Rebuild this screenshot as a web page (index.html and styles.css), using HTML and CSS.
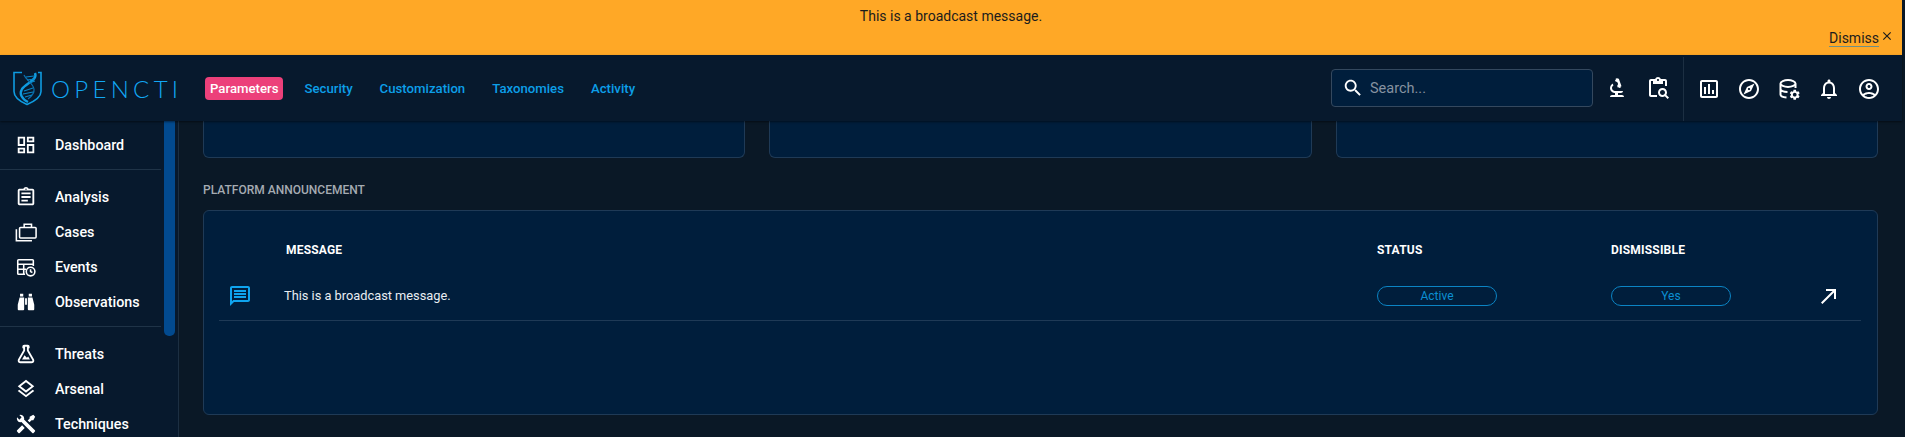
FILE: index.html
```html
<!DOCTYPE html>
<html lang="en">
<head>
    <meta charset="UTF-8">
    <title>OpenCTI - Parameters</title>
    <link rel="stylesheet" href="styles.css">
</head>
<body>
    <div class="banner">
        <div class="banner-text">This is a broadcast message.</div>
        <div class="banner-actions">
            <a class="dismiss">Dismiss</a>
            <svg class="close-icon" viewBox="0 0 24 24"><path d="M19 6.41L17.59 5 12 10.59 6.41 5 5 6.41 10.59 12 5 17.59 6.41 19 12 13.41 17.59 19 19 17.59 13.41 12z"/></svg>
        </div>
    </div>

    <header class="topbar">
        <div class="logo">
            <svg class="logo-mark" viewBox="0 0 30 35" fill="none" stroke="#0f9be0">
                <path d="M9 1.5H1v19c0 6 6 10 13 13 7-3 14-7 14-13v-19h-3" stroke-width="1.6"/>
                <path d="M22 2C25 9 13 12 9 18c-3 5 0 10 6 13" stroke-width="2.4"/>
                <path d="M11 4c2 5 9 8 10 14 .6 4-2 7-6 10" stroke-width="1.2" stroke="#0a6fae"/>
                <path d="M13 6l8-1M14 9l8-1M16 12l6-2M11 20l9-3M10 23l10-2M12 26l7-2" stroke-width="1.1" stroke="#0a86c5"/>
            </svg>
            <span class="logo-text">OPENCTI</span>
        </div>
        <nav class="tabs">
            <a class="tab tab-active">Parameters</a>
            <a class="tab">Security</a>
            <a class="tab">Customization</a>
            <a class="tab">Taxonomies</a>
            <a class="tab">Activity</a>
        </nav>
        <div class="search">
            <svg class="icon" viewBox="0 0 24 24"><path d="M15.5 14h-.79l-.28-.27C15.41 12.59 16 11.11 16 9.5 16 5.91 13.09 3 9.5 3S3 5.91 3 9.5 5.91 16 9.5 16c1.61 0 3.09-.59 4.23-1.57l.27.28v.79l5 4.99L20.49 19l-4.99-5zm-6 0C7.01 14 5 11.99 5 9.5S7.01 5 9.5 5 14 7.01 14 9.5 11.99 14 9.5 14z"/></svg>
            <span class="search-text">Search...</span>
        </div>
        <div class="tools">
            <svg class="icon" viewBox="0 0 24 24"><path d="M7 19c-1.1 0-2 .9-2 2h14c0-1.1-.9-2-2-2h-4v-2h3c1.1 0 2-.9 2-2h-8c-1.66 0-3-1.34-3-3 0-1.09.59-2.04 1.46-2.56C8.17 9.03 8 8.54 8 8c0-.21.04-.42.09-.62C6.28 8.13 5 9.92 5 12c0 2.76 2.24 5 5 5v2H7z"/><path d="M10.56 5.51C11.91 5.54 13 6.64 13 8c0 .75-.33 1.41-.85 1.87l.59 1.62.94-.34.34.94 1.88-.68-.34-.94.94-.34-2.74-7.52-.94.34-.34-.94-1.88.68.34.94-.94.35.56 1.53z"/></svg>
            <svg class="icon" viewBox="0 0 24 24"><path d="M5 5h2v3h10V5h2v5h2V5c0-1.1-.9-2-2-2h-4.18C14.4 1.84 13.3 1 12 1S9.6 1.84 9.18 3H5c-1.1 0-2 .9-2 2v14c0 1.1.9 2 2 2h6v-2H5V5zm7-2c.55 0 1 .45 1 1s-.45 1-1 1-1-.45-1-1 .45-1 1-1z"/><path d="M20.3 18.9c.4-.7.7-1.5.7-2.4 0-2.5-2-4.5-4.5-4.5S12 14 12 16.5s2 4.5 4.5 4.5c.9 0 1.7-.3 2.4-.7l2.7 2.7 1.4-1.4-2.7-2.7zm-3.8.1c-1.4 0-2.5-1.1-2.5-2.5s1.1-2.5 2.5-2.5 2.5 1.1 2.5 2.5-1.1 2.5-2.5 2.5z"/></svg>
        </div>
        <div class="tools tools-user">
            <svg class="icon" viewBox="0 0 24 24"><path d="M9 17H7v-7h2v7zm4 0h-2V7h2v10zm4 0h-2v-4h2v4zm2 2H5V5h14v14zm0-16H5c-1.1 0-2 .9-2 2v14c0 1.1.9 2 2 2h14c1.1 0 2-.9 2-2V5c0-1.1-.9-2-2-2z"/></svg>
            <svg class="icon" viewBox="0 0 24 24"><path d="M12 2C6.48 2 2 6.48 2 12s4.48 10 10 10 10-4.48 10-10S17.52 2 12 2zm0 18c-4.41 0-8-3.59-8-8s3.59-8 8-8 8 3.59 8 8-3.59 8-8 8zm-5.5-2.5l7.51-3.49L17.5 6.5 9.99 9.99 6.5 17.5zm5.5-6.6c.61 0 1.1.49 1.1 1.1s-.49 1.1-1.1 1.1-1.1-.49-1.1-1.1.49-1.1 1.1-1.1z"/></svg>
            <svg class="icon" viewBox="0 0 24 24">
                <path class="line" d="M3.500 6.500C3.500 4.600 7.100 3 11 3s7.500 1.600 7.500 3.500S14.900 10 11 10 3.500 8.400 3.500 6.500zM3.500 6.500v11c0 1.500 2.500 2.700 6 3M18.500 6.500V11M3.500 12c0 1.600 3 3 7 3"/>
                <path transform="translate(11.500 11.500) scale(.52)" d="M19.14 12.94c.04-.3.06-.61.06-.94 0-.32-.02-.64-.07-.94l2.03-1.58c.18-.14.23-.41.12-.61l-1.92-3.32c-.12-.22-.37-.29-.59-.22l-2.39.96c-.5-.38-1.03-.7-1.62-.94l-.36-2.54c-.04-.24-.24-.41-.48-.41h-3.84c-.24 0-.43.17-.47.41l-.36 2.54c-.59.24-1.13.57-1.62.94l-2.39-.96c-.22-.08-.47 0-.59.22L2.74 8.87c-.12.21-.08.47.12.61l2.03 1.58c-.05.3-.09.63-.09.94s.02.64.07.94l-2.03 1.58c-.18.14-.23.41-.12.61l1.92 3.32c.12.22.37.29.59.22l2.39-.96c.5.38 1.03.7 1.62.94l.36 2.54c.05.24.24.41.48.41h3.84c.24 0 .44-.17.47-.41l.36-2.54c.59-.24 1.13-.56 1.62-.94l2.39.96c.22.08.47 0 .59-.22l1.92-3.32c.12-.22.07-.47-.12-.61l-2.01-1.58zM12 15.6c-1.98 0-3.6-1.62-3.6-3.6s1.62-3.6 3.6-3.6 3.6 1.62 3.6 3.6-1.62 3.6-3.6 3.6z"/>
            </svg>
            <svg class="icon" viewBox="0 0 24 24"><path d="M12 22c1.1 0 2-.9 2-2h-4c0 1.1.9 2 2 2zm6-6v-5c0-3.07-1.63-5.64-4.5-6.32V4c0-.83-.67-1.5-1.5-1.5s-1.5.67-1.5 1.5v.68C7.64 5.36 6 7.92 6 11v5l-2 2v1h16v-1l-2-2zm-2 1H8v-6c0-2.48 1.51-4.5 4-4.5s4 2.02 4 4.5v6z"/></svg>
            <svg class="icon" viewBox="0 0 24 24"><path d="M12 2C6.48 2 2 6.48 2 12s4.48 10 10 10 10-4.48 10-10S17.52 2 12 2zM7.35 18.5C8.66 17.56 10.26 17 12 17s3.34.56 4.65 1.5c-1.31.94-2.91 1.5-4.65 1.5s-3.34-.56-4.65-1.5zm10.79-1.38C16.45 15.8 14.32 15 12 15s-4.45.8-6.14 2.12C4.7 15.73 4 13.95 4 12c0-4.42 3.58-8 8-8s8 3.58 8 8c0 1.95-.7 3.73-1.86 5.12z"/><path d="M12 6c-1.93 0-3.5 1.57-3.5 3.5S10.07 13 12 13s3.5-1.57 3.5-3.5S13.93 6 12 6zm0 5c-.83 0-1.5-.67-1.5-1.5S11.17 8 12 8s1.5.67 1.5 1.5S12.83 11 12 11z"/></svg>
        </div>
    </header>

    <div class="layout">
        <aside class="sidebar">
            <div class="scroll-thumb"></div>
            <div class="nav-group nav-first">
                <a class="nav-item"><svg class="icon" viewBox="0 0 24 24"><path d="M19 5v2h-4V5h4M9 5v6H5V5h4m10 8v6h-4v-6h4M9 17v2H5v-2h4M21 3h-8v6h8V3zM11 3H3v10h8V3zm10 8h-8v10h8V11zm-10 4H3v6h8v-6z"/></svg>Dashboard</a>
            </div>
            <div class="nav-group">
                <a class="nav-item"><svg class="icon" viewBox="0 0 24 24"><path d="M7 15h7v2H7zm0-4h10v2H7zm0-4h10v2H7zm12-4h-4.18C14.4 1.84 13.3 1 12 1c-1.3 0-2.4.84-2.82 2H5c-.14 0-.27.01-.4.04-.39.08-.74.28-1.01.55-.18.18-.33.4-.43.64-.1.23-.16.49-.16.77v14c0 .27.06.54.16.78s.25.45.43.64c.27.27.62.47 1.01.55.13.02.26.03.4.03h14c1.1 0 2-.9 2-2V5c0-1.1-.9-2-2-2zm-7-.25c.41 0 .75.34.75.75s-.34.75-.75.75-.75-.34-.75-.75.34-.75.75-.75zM19 19H5V5h14v14z"/></svg>Analysis</a>
                <a class="nav-item"><svg class="icon" viewBox="0 0 24 24"><g class="line thin"><path d="M1.500 9v12.500h17"/><rect x="5" y="7" width="18" height="11.500" rx="1"/><path d="M10 7V3.500h8V7"/></g></svg>Cases</a>
                <a class="nav-item"><svg class="icon" viewBox="0 0 24 24"><g class="line thin"><path d="M11 20H4a1 1 0 0 1-1-1V5a1 1 0 0 1 1-1h15a1 1 0 0 1 1 1v6M3 9h17M3 14.500h9M9.500 9v11"/><circle cx="17" cy="17" r="4.700"/><path d="M17 14.500V17l2 1"/></g></svg>Events</a>
                <a class="nav-item"><svg class="icon" viewBox="0 0 24 24"><path d="M11 8h2v7h-2zM10 20a1 1 0 0 1-1 1H4a1 1 0 0 1-1-1v-5l2-8h5v13zM14 20V7h5l2 8v5a1 1 0 0 1-1 1h-5a1 1 0 0 1-1-1zM5.500 3H9v3H5.500zM15 3h3.500v3H15z"/></svg>Observations</a>
            </div>
            <div class="nav-group">
                <a class="nav-item"><svg class="icon" viewBox="0 0 24 24"><path d="M5,19A1,1 0 0,0 6,20H18A1,1 0 0,0 19,19C19,18.79 18.93,18.59 18.82,18.43L13,8.35V4H11V8.35L5.18,18.43C5.07,18.59 5,18.79 5,19M6,22A3,3 0 0,1 3,19C3,18.4 3.18,17.84 3.5,17.37L9,7.81V6A1,1 0 0,1 8,5V4A2,2 0 0,1 10,2H14A2,2 0 0,1 16,4V5A1,1 0 0,1 15,6V7.81L20.5,17.37C20.82,17.84 21,18.4 21,19A3,3 0 0,1 18,22H6M13,16L14.34,14.66L16.27,18H7.73L10.39,13.39L13,16Z"/></svg>Threats</a>
                <a class="nav-item"><svg class="icon" viewBox="0 0 24 24"><path d="M11.99 18.54l-7.37-5.73L3 14.07l9 7 9-7-1.63-1.27zM12 16l7.36-5.73L21 9l-9-7-9 7 1.63 1.27L12 16zm0-11.47L17.74 9 12 13.47 6.26 9 12 4.53z"/></svg>Arsenal</a>
                <a class="nav-item"><svg class="icon" viewBox="0 0 24 24"><path d="M21.71 20.29L20.29 21.71A1 1 0 0 1 18.88 21.71L7 9.85A3.81 3.81 0 0 1 6 10A4 4 0 0 1 2.22 4.7L4.76 7.24L5.29 6.71L6.71 5.29L7.24 4.76L4.7 2.22A4 4 0 0 1 10 6A3.81 3.81 0 0 1 9.85 7L21.71 18.88A1 1 0 0 1 21.71 20.29M2.29 18.88A1 1 0 0 0 2.29 20.29L3.71 21.71A1 1 0 0 0 5.12 21.71L10.59 16.25L7.76 13.42M20 2L16 4V6L13.83 8.17L15.83 10.17L18 8H20L22 4Z"/></svg>Techniques</a>
            </div>
        </aside>

        <main class="content">
            <div class="cards">
                <div class="card"></div>
                <div class="card"></div>
                <div class="card"></div>
            </div>
            <h2 class="section-title">PLATFORM ANNOUNCEMENT</h2>
            <section class="panel">
                <div class="list-header">
                    <span></span>
                    <span class="col-message">MESSAGE</span>
                    <span>STATUS</span>
                    <span>DISMISSIBLE</span>
                </div>
                <div class="list-row">
                    <svg class="message-icon" viewBox="0 0 24 24"><path d="M4 4h16v12H5.17L4 17.17V4m0-2c-1.1 0-1.99.9-1.99 2L2 22l4-4h14c1.1 0 2-.9 2-2V4c0-1.1-.9-2-2-2H4zm2 10h12v2H6v-2zm0-3h12v2H6V9zm0-3h12v2H6V6z"/></svg>
                    <span class="message">This is a broadcast message.</span>
                    <span class="chip">Active</span>
                    <span class="chip">Yes</span>
                    <svg class="row-arrow" viewBox="0 0 24 24"><path d="M9 5v2h6.59L4 18.59 5.41 20 17 8.41V15h2V5z"/></svg>
                </div>
            </section>
        </main>
    </div>
</body>
</html>
```

FILE: styles.css
```css
/* General */
html, body {
    height: 100%;
}

body {
    font-family: Roboto, "Liberation Sans", sans-serif;
    background-color: #0a1826;
    color: #fff;
    margin: 0;
    padding-right: 3px;
    display: flex;
    flex-direction: column;
    overflow: hidden;
}

.icon {
    width: 24px;
    height: 24px;
    fill: currentColor;
    flex-shrink: 0;
}

.icon .line {
    fill: none;
    stroke: currentColor;
    stroke-width: 2;
}

.icon .thin {
    stroke-width: 1.7;
}

/* Broadcast banner */
.banner {
    height: 55px;
    flex-shrink: 0;
    box-sizing: border-box;
    background-color: #ffa826;
    color: #1c1c1c;
    font-size: 14px;
    padding-top: 8px;
}

.banner-text {
    text-align: center;
    line-height: 16px;
}

.banner-actions {
    display: flex;
    justify-content: flex-end;
    align-items: flex-start;
    gap: 1px;
    margin-top: 6px;
    padding-right: 8px;
}

.dismiss {
    line-height: 16px;
    border-bottom: 1px solid #6f8f86;
}

.close-icon {
    width: 14px;
    height: 14px;
    margin-top: -1px;
    fill: #1c1c1c;
}

/* Top bar */
.topbar {
    height: 66px;
    flex-shrink: 0;
    display: flex;
    align-items: center;
    background-color: #07192d;
    box-shadow: 0 1px 2px rgba(0, 0, 0, 0.5);
    position: relative;
    z-index: 2;
}

.logo {
    display: flex;
    align-items: center;
    gap: 8px;
    width: 205px;
    box-sizing: border-box;
    padding-left: 13px;
}

.logo-mark {
    width: 30px;
    height: 35px;
}

.logo-text {
    font-family: Lato, sans-serif;
    font-weight: 300;
    font-size: 24px;
    letter-spacing: 4.3px;
    color: #12a8f5;
}

.tabs {
    display: flex;
    align-items: center;
    gap: 27px;
}

.tab {
    font-size: 13.2px;
    font-weight: 500;
    color: #0c9fe8;
    line-height: 23px;
}

.tab-active {
    background-color: #ec407a;
    color: #fff;
    border-radius: 4px;
    padding: 0 5px;
    margin-right: -6px;
}

.search {
    margin-left: auto;
    width: 262px;
    height: 38px;
    box-sizing: border-box;
    display: flex;
    align-items: center;
    gap: 6px;
    padding-left: 10px;
    background-color: #001e3c;
    border: 1px solid #34485e;
    border-radius: 4px;
}

.search .icon {
    width: 22px;
    height: 22px;
}

.search-text {
    font-size: 14.5px;
    color: #8692a0;
}

.tools {
    display: flex;
    align-items: center;
    gap: 17px;
    padding: 0 13px 0 12px;
}

.tools-user {
    align-self: stretch;
    gap: 16px;
    margin-top: 2px;
    padding: 0 21px 0 13px;
    border-left: 1px solid #1c2f42;
}

/* Sidebar */
.layout {
    flex: 1;
    display: flex;
    min-height: 0;
}

.sidebar {
    width: 179px;
    flex-shrink: 0;
    box-sizing: border-box;
    background-color: #07192d;
    border-right: 1px solid #1c2f42;
    position: relative;
    padding-right: 17px;
    overflow: hidden;
}

.scroll-thumb {
    position: absolute;
    top: 0;
    right: 3px;
    width: 11px;
    height: 215px;
    background-color: #024a8f;
    border-radius: 0 0 5px 5px;
}

.nav-group {
    padding: 9px 0 7px;
    border-bottom: 1px solid #1f3347;
}

.nav-first {
    padding-top: 6px;
}

.nav-item {
    height: 35px;
    display: flex;
    align-items: center;
    gap: 15px;
    padding-left: 13px;
    font-size: 14.3px;
    font-weight: 500;
    color: #fff;
}

.nav-item .icon {
    width: 22px;
    height: 22px;
    margin-left: 2px;
    margin-right: 3px;
}

/* Main content */
.content {
    flex: 1;
    min-width: 0;
    padding: 0 24px;
}

.cards {
    display: grid;
    grid-template-columns: repeat(3, 1fr);
    gap: 24px;
    height: 37px;
}

.card {
    background-color: #001e3c;
    border: 1px solid #1f3a56;
    border-top: none;
    border-radius: 0 0 6px 6px;
}

.section-title {
    margin: 25px 0 13px;
    font-size: 12px;
    font-weight: 500;
    line-height: 14px;
    color: #a5abb2;
}

.panel {
    height: 205px;
    box-sizing: border-box;
    background-color: #001e3c;
    border: 1px solid #1f3a56;
    border-radius: 6px;
    padding: 30px 16px 0 15px;
}

.list-header, .list-row {
    display: grid;
    grid-template-columns: 65px 1093px 234px 1fr;
    align-items: center;
}

.list-header {
    height: 18px;
    margin-bottom: 12px;
    font-size: 12px;
    font-weight: 700;
    letter-spacing: 0.2px;
}

.col-message {
    padding-left: 2px;
}

.list-row {
    height: 50px;
    box-sizing: border-box;
    border-bottom: 1px solid #1f3a56;
    position: relative;
}

.message-icon {
    width: 24px;
    height: 24px;
    fill: #0fa4ee;
    margin-left: 9px;
}

.message {
    font-size: 12.8px;
    color: #e8edf2;
}

.chip {
    width: 120px;
    height: 20px;
    box-sizing: border-box;
    border: 1px solid #0b84c4;
    border-radius: 10px;
    font-size: 12px;
    line-height: 18px;
    text-align: center;
    color: #0b8fd3;
}

/* Arrow at the end of the row, over the last column */
.row-arrow {
    position: absolute;
    right: 20px;
    top: 13px;
    width: 24px;
    height: 24px;
    fill: #fff;
}
```
